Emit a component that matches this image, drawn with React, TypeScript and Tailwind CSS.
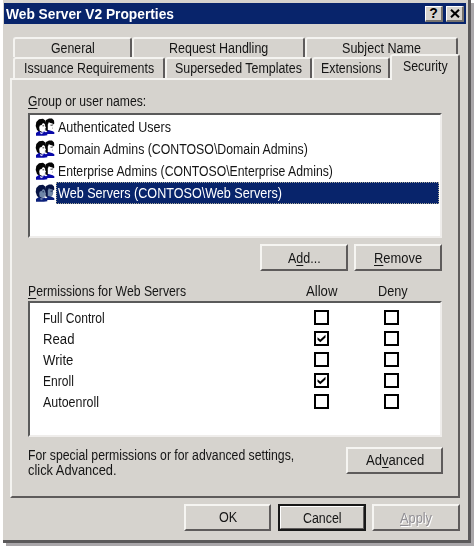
import { useLayoutEffect, useRef, useState } from "react";
import type { ReactNode } from "react";

/** Text condensed to a given width, like a bitmap system font. */
function T({ w, children, className = "" }: { w: number; children: ReactNode; className?: string }) {
  const ref = useRef<HTMLSpanElement>(null);
  const [scale, setScale] = useState(1);
  useLayoutEffect(() => {
    if (ref.current) setScale(w / ref.current.offsetWidth);
  }, [w]);
  return (
    <span className={`block h-4 shrink-0 whitespace-nowrap leading-4 ${className}`} style={{ width: w }}>
      <span ref={ref} className="inline-block origin-left" style={{ transform: `scaleX(${scale})` }}>
        {children}
      </span>
    </span>
  );
}

function U({ children }: { children: ReactNode }) {
  return <span className="underline decoration-1 underline-offset-2">{children}</span>;
}

const raised =
  "border-t-2 border-l-2 border-r-2 border-b-2 border-t-[#f6f5f2] border-l-[#f6f5f2] border-r-[#5e5b5b] border-b-[#5e5b5b]";

function Button({ className, children }: { className: string; children: ReactNode }) {
  return <button className={`flex h-[27px] shrink-0 items-center justify-center ${raised} ${className}`}>{children}</button>;
}

function Tab({ className, children }: { className: string; children: ReactNode }) {
  return (
    <div
      className={`flex shrink-0 items-center justify-center rounded-t-[3px] border-t-2 border-r-2 border-l-2 border-t-[#f4f3f0] border-r-[#5e5b5b] border-l-[#f4f3f0] bg-[#d6d3ce] ${className}`}
    >
      {children}
    </div>
  );
}

function UsersIcon({ selected }: { selected?: boolean }) {
  const hair = selected ? "#071445" : "#050505";
  const face = selected ? "#6f86a8" : "#ffffff";
  const body = selected ? "#0b207b" : "#0808a8";
  return (
    <svg width="20" height="19" viewBox="0 0 20 19" className="shrink-0">
      <path d="M10 6 11 2 14 .5h3l2 2 .3 3-1.3 1-.5 4-3 3-4-1z" fill={hair} />
      <path d="m12.8 6.5 1-2.2 1.7.7 2.2.4-.2 2.1 1 1.6-1 .6-.2 2.3-2.2 1.4-2.3-1.4z" fill={face} />
      <path d="m10.5 15 3-3 4.2 1.2 1.6 1v1.8h-7z" fill={body} />
      <path d="m.7 8 .6-4L4 1.2 8 .7l2.6 2 .3 3-1.4 1.8-.3 5-4 2.2L2 12z" fill={hair} />
      <path d="m4.2 9.4.6-2 1.8-.3L8 5l1.9.9-.1 2.2 1.2 1.7-1.1.6-.3 2.3-2.3 1.4-2.6-1.4z" fill={face} />
      <path d="m1 15 3.2-2.3 2 1.8 3-1L12.3 15v2.2l-3.5.6H1z" fill={body} />
      <path d="M7.6 7.8h1.2M15.6 7.2h1.2" stroke={hair} strokeWidth="1" />
      <path d="m5 14.6 1.8 1.2 1.2-1.5" fill="none" stroke={face} strokeWidth="1" />
    </svg>
  );
}

function Check({ checked }: { checked?: boolean }) {
  return (
    <span className="flex h-[15px] w-[15px] shrink-0 items-center justify-center border-2 border-black bg-white">
      {checked && (
        <svg width="9" height="9" viewBox="0 0 9 9">
          <path d="M.5 3.2 3.3 5.5 8.5.8v2.6L3.3 8.3.5 5.8z" fill="#000" />
        </svg>
      )}
    </span>
  );
}

const users = [
  { name: "Authenticated Users", w: 113 },
  { name: "Domain Admins (CONTOSO\\Domain Admins)", w: 250 },
  { name: "Enterprise Admins (CONTOSO\\Enterprise Admins)", w: 275 },
  { name: "Web Servers (CONTOSO\\Web Servers)", w: 224, selected: true },
];

const permissions = [
  { name: "Full Control", w: 62 },
  { name: "Read", w: 31, allow: true },
  { name: "Write", w: 30 },
  { name: "Enroll", w: 31, allow: true },
  { name: "Autoenroll", w: 56 },
];

const sunken =
  "border-t-2 border-l-2 border-r-2 border-b-2 border-t-[#5a5a5a] border-l-[#5a5a5a] border-r-[#efedeb] border-b-[#efedeb] bg-white";

export default function App() {
  return (
    <div className="h-[546px] w-[474px] overflow-hidden bg-white font-['Liberation_Sans',Arial,sans-serif] text-[14px] text-[#151515]">
      <div className="ml-[3px] h-[543px] w-[468px] border-r-[3px] border-b-[3px] border-[#5b595a] bg-[#d6d3ce] pt-[3px] shadow-[3px_3px_0_0_#aaa7aa]">
        <header className="mr-[2px] ml-px flex h-[21px] items-center bg-[#08246b] pl-[2px] text-white">
          <T w={168} className="font-bold">Web Server V2 Properties</T>
          <button className="ml-auto flex h-4 w-[18px] items-center justify-center border-t border-r-2 border-b-2 border-l border-t-white border-r-[#77736e] border-b-[#77736e] border-l-white bg-[#d6d3ce] text-[14px] leading-none font-bold text-black">
            ?
          </button>
          <button className="mr-[2px] ml-[3px] flex h-4 w-[18px] items-center justify-center border-t border-r-2 border-b-2 border-l border-t-white border-r-[#77736e] border-b-[#77736e] border-l-white bg-[#d6d3ce]">
            <svg width="10" height="9" viewBox="0 0 10 9">
              <path d="m1 .7 8 7.6M9 .7 1 8.3" stroke="#000" strokeWidth="2" />
            </svg>
          </button>
        </header>

        <div className="mt-[13px] ml-[10px] flex h-[20px]">
          <Tab className="w-[119px]"><T w={44}>General</T></Tab>
          <Tab className="w-[173px]"><T w={99}>Request Handling</T></Tab>
          <Tab className="w-[153px]"><T w={79}>Subject Name</T></Tab>
        </div>
        <div className="ml-[10px] flex h-[21px]">
          <Tab className="w-[152px]"><T w={130} className="-mt-px">Issuance Requirements</T></Tab>
          <Tab className="w-[147px]"><T w={127} className="-mt-px">Superseded Templates</T></Tab>
          <Tab className="w-[78px] border-r-0"><T w={60} className="-mt-px">Extensions</T></Tab>
          <Tab className="z-10 -mt-[3px] h-[26px] w-[70px]"><T w={45} className="-mt-[5px]">Security</T></Tab>
        </div>

        <main className="ml-[7px] h-[420px] w-[450px] border-t-2 border-r-2 border-b-2 border-l-2 border-t-[#f4f3f0] border-r-[#5e5b5b] border-b-[#5e5b5b] border-l-[#f4f3f0] pl-[16px]">
          <T w={118} className="mt-[13px]"><U>G</U>roup or user names:</T>
          <div className={`mt-[4px] h-[125px] w-[414px] pt-px ${sunken}`}>
            {users.map((u) => (
              <div key={u.name} className="flex h-[22px] items-center pl-[5px]">
                <UsersIcon selected={u.selected} />
                <div
                  className={`ml-px flex h-[22px] items-center border border-dotted pl-px ${
                    u.selected ? "mr-px flex-1 border-[#a8a898] bg-[#08246b] text-white" : "border-transparent"
                  }`}
                >
                  <T w={u.w}>{u.name}</T>
                </div>
              </div>
            ))}
          </div>
          <div className="mt-[6px] flex gap-[6px] pl-[232px]">
            <Button className="w-[88px]"><T w={33}>A<U>d</U>d...</T></Button>
            <Button className="w-[88px]"><T w={48}><U>R</U>emove</T></Button>
          </div>
          <div className="mt-[12px] flex">
            <T w={158}><U>P</U>ermissions for Web Servers</T>
            <T w={31} className="ml-[120px]">Allow</T>
            <T w={30} className="ml-[41px]">Deny</T>
          </div>
          <div className={`mt-[2px] h-[136px] w-[414px] pt-[4px] ${sunken}`}>
            {permissions.map((p) => (
              <div key={p.name} className="flex h-[21px] items-center pl-[13px]">
                <div className="w-[271px]"><T w={p.w}>{p.name}</T></div>
                <Check checked={p.allow} />
                <div className="w-[55px]" />
                <Check />
              </div>
            ))}
          </div>
          <div className="mt-[10px] flex">
            <div>
              <T w={266}>For special permissions or for advanced settings,</T>
              <T w={89} className="-mt-px">click Advanced.</T>
            </div>
            <Button className="ml-[52px] w-[97px]"><T w={58} className="-mt-px">Ad<U>v</U>anced</T></Button>
          </div>
        </main>

        <footer className="mt-[6px] ml-[181px] flex">
          <Button className="w-[87px]"><T w={18} className="-mt-px">OK</T></Button>
          <div className="ml-[7px] h-[27px] w-[88px] border-2 border-[#181818]">
            <div className="flex h-[23px] items-center justify-center border-t border-r border-b border-l border-t-white border-r-[#5e5b5b] border-b-[#5e5b5b] border-l-white">
              <T w={39}>Cancel</T>
            </div>
          </div>
          <Button className="ml-[6px] w-[88px] text-[#929095] [text-shadow:1px_1px_0_#fff]"><T w={32}><U>A</U>pply</T></Button>
        </footer>
      </div>
    </div>
  );
}
